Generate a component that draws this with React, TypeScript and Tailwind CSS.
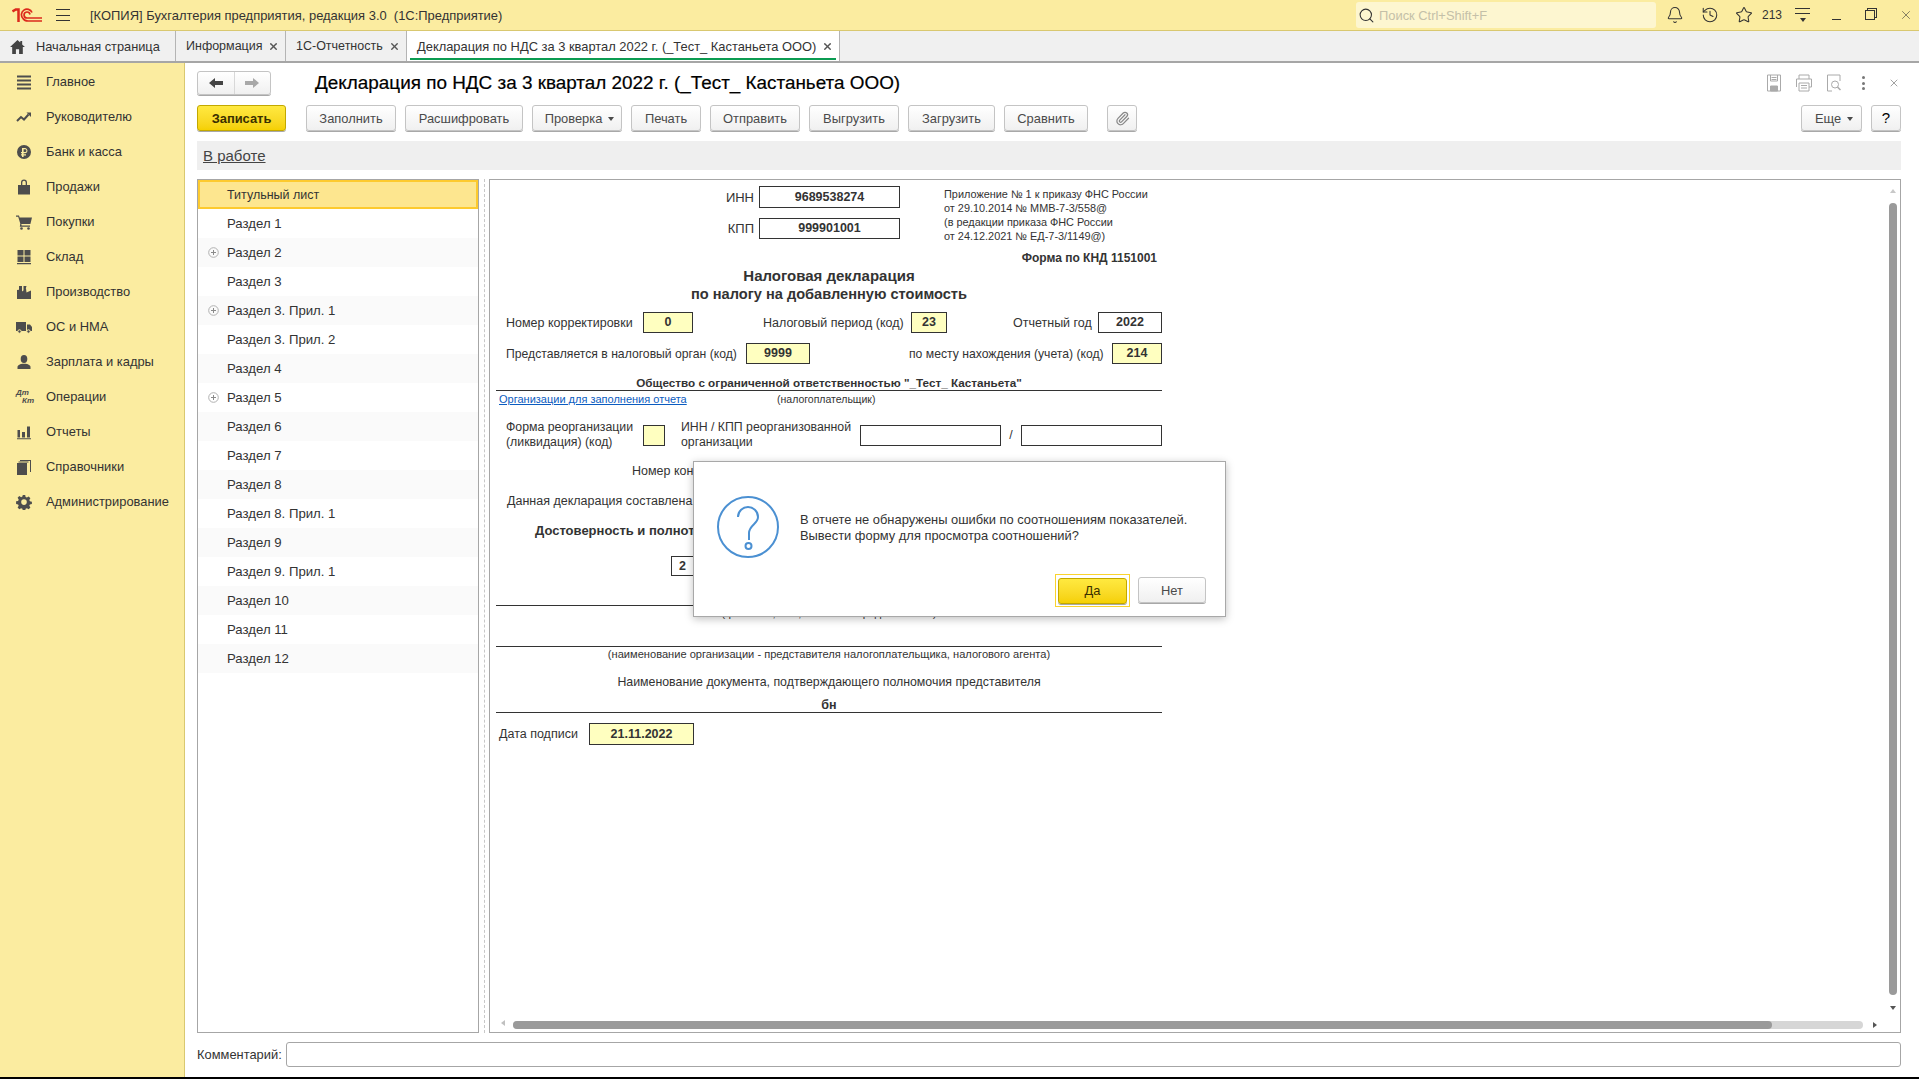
import type { ReactNode } from 'react';
import { Bell, History, Star, Paperclip, Search, X } from 'lucide-react';
import clsx from 'clsx';

const SECTIONS = [
  { name: 'Титульный лист' },
  { name: 'Раздел 1' },
  { name: 'Раздел 2', plus: true },
  { name: 'Раздел 3' },
  { name: 'Раздел 3. Прил. 1', plus: true },
  { name: 'Раздел 3. Прил. 2' },
  { name: 'Раздел 4' },
  { name: 'Раздел 5', plus: true },
  { name: 'Раздел 6' },
  { name: 'Раздел 7' },
  { name: 'Раздел 8' },
  { name: 'Раздел 8. Прил. 1' },
  { name: 'Раздел 9' },
  { name: 'Раздел 9. Прил. 1' },
  { name: 'Раздел 10' },
  { name: 'Раздел 11' },
  { name: 'Раздел 12' },
];

function NavIcon({ children }: { children: ReactNode }) {
  return (
    <svg viewBox="0 0 16 16" className="w-4 h-4 text-[#4d4d4d]" fill="currentColor">
      {children}
    </svg>
  );
}

const NAV: { label: string; icon: ReactNode }[] = [
  {
    label: 'Главное',
    icon: (
      <NavIcon>
        <path d="M1 1.500h14v2H1zM1 5.500h14v2H1zM1 9.500h14v2H1zM1 13.500h14v2H1z" />
      </NavIcon>
    ),
  },
  {
    label: 'Руководителю',
    icon: (
      <NavIcon>
        <path d="M1 12l4-4 3 2.500 4.500-5" fill="none" stroke="currentColor" strokeWidth="2" />
        <path d="M10.500 3.500H15V8z" />
      </NavIcon>
    ),
  },
  {
    label: 'Банк и касса',
    icon: (
      <NavIcon>
        <path
          fillRule="evenodd"
          d="M8 1a7 7 0 1 1 0 14A7 7 0 0 1 8 1zM6 4v4H5v1.300h1v1H5v1.300h1V13h1.600v-1.400H10v-1.300H7.600v-1H9.300a2.700 2.700 0 0 0 0-5.300zm1.600 1.300h1.500a1.350 1.350 0 0 1 0 2.700H7.600z"
        />
      </NavIcon>
    ),
  },
  {
    label: 'Продажи',
    icon: (
      <NavIcon>
        <path d="M2 6h3V3.500a3 3 0 0 1 6 0V6h3v9.500H2zM6.300 6h3.400V3.500a1.700 1.700 0 0 0-3.400 0z" fillRule="evenodd" />
      </NavIcon>
    ),
  },
  {
    label: 'Покупки',
    icon: (
      <NavIcon>
        <path d="M0 1.500h3l.6 2H16l-1.600 6.500H5.300L5.600 11.500H14v1.200H3.800l.5-3L2.200 2.800H0z" />
        <circle cx="5.500" cy="14.500" r="1.300" />
        <circle cx="12.500" cy="14.500" r="1.300" />
      </NavIcon>
    ),
  },
  {
    label: 'Склад',
    icon: (
      <NavIcon>
        <path d="M1.500 1h6v5.500h-6zM8.500 1h6v5.500h-6zM1.500 7.500h6V13h-6zM8.500 7.500h6V13h-6zM1 14h14v1.300H1z" />
      </NavIcon>
    ),
  },
  {
    label: 'Производство',
    icon: (
      <NavIcon>
        <path d="M1 15V6l2-.2V2h3v5.500L10 4.500l.5 4L15 6.500V15zM7.500 2h3l-1 3.500-2 1.500z" />
      </NavIcon>
    ),
  },
  {
    label: 'ОС и НМА',
    icon: (
      <NavIcon>
        <path d="M0 3h10v9H0zM11 5.500h3l2 2.500v4h-5z" />
        <circle cx="3.500" cy="12.500" r="1.700" stroke="#fbeca0" />
        <circle cx="12.500" cy="12.500" r="1.700" stroke="#fbeca0" />
      </NavIcon>
    ),
  },
  {
    label: 'Зарплата и кадры',
    icon: (
      <NavIcon>
        <ellipse cx="8" cy="5" rx="3.300" ry="4" />
        <path d="M1.500 15v-2c0-2 3-3 4.500-3.300h4c1.500.3 4.500 1.300 4.500 3.300v2z" />
      </NavIcon>
    ),
  },
  {
    label: 'Операции',
    icon: (
      <span className="flex flex-col text-[8px] leading-[8px] font-bold italic text-[#4d4d4d] w-4 h-4 whitespace-nowrap">
        <span>Дт</span>
        <span className="ml-[6px]">Кт</span>
      </span>
    ),
  },
  {
    label: 'Отчеты',
    icon: (
      <NavIcon>
        <path d="M1.500 6h2.500v7.500H1.500zM6 8h3v5.500H6zM11 2.500h3v11h-3zM1 14.300h14v1H1z" />
      </NavIcon>
    ),
  },
  {
    label: 'Справочники',
    icon: (
      <NavIcon>
        <path d="M1 4h10v12H1zM4 1h11v12h-1V2H4zM2.500 2.500h10v1h-10z" />
      </NavIcon>
    ),
  },
  {
    label: 'Администрирование',
    icon: (
      <NavIcon>
        <path
          fillRule="evenodd"
          d="M6.800 1h2.400l.4 2 1.300.6 1.800-1.100 1.700 1.700-1.100 1.800.6 1.300 2 .4v2.400l-2 .4-.6 1.300 1.100 1.800-1.700 1.700-1.800-1.100-1.300.6-.4 2H6.800l-.4-2-1.300-.6-1.800 1.100-1.700-1.700 1.100-1.800-.6-1.300-2-.4V7.300l2-.4.6-1.300-1.100-1.800 1.700-1.700 1.800 1.100 1.300-.6zM8 5.300a2.800 2.800 0 1 0 0 5.600 2.800 2.800 0 0 0 0-5.600z"
        />
      </NavIcon>
    ),
  },
];

function Caret({ className }: { className?: string }) {
  return (
    <svg viewBox="0 0 6 4" className={clsx('w-[6px] h-[4px]', className)} fill="currentColor">
      <path d="M0 0h6L3 4z" />
    </svg>
  );
}

function Btn({ w, children, primary, className }: { w: string; children: ReactNode; primary?: boolean; className?: string }) {
  return (
    <div
      className={clsx(
        'h-[26px] pt-[1px] rounded-[3px] border flex items-center justify-center shrink-0 shadow-[0_1px_0_#a8a8a8]',
        primary
          ? 'bg-gradient-to-b from-[#ffe93f] to-[#f5d000] border-[#c2a800] text-[#3a3000]'
          : 'bg-gradient-to-b from-white to-[#f0f0f0] border-[#c4c4c4] text-[#4a4a4a]',
        w,
        className,
      )}
    >
      {children}
    </div>
  );
}

function Field({ w, children, yellow, h = 'h-[21px]' }: { w: string; children?: ReactNode; yellow?: boolean; h?: string }) {
  return (
    <div
      className={clsx(
        'border border-[#333] flex items-center justify-center font-bold text-[12.500px] text-[#333] shrink-0',
        yellow ? 'bg-[#ffffc0]' : 'bg-white',
        w,
        h,
      )}
    >
      {children}
    </div>
  );
}

function Tab({ w, label, active, size }: { w: string; label: string; active?: boolean; size?: string }) {
  return (
    <div className={clsx('relative flex items-center shrink-0 border-r border-[#b4b4b4] justify-between pl-[10px] pr-[6px] pt-[1px] h-full', w, active && 'bg-white')}>
      <span className={clsx('whitespace-nowrap', size)}>{label}</span>
      <X className="w-[11px] h-[11px] text-[#555]" strokeWidth={3} />
      {active && <div className="absolute left-[3px] right-[3px] bottom-[1px] h-[2px] bg-[#0b9b51]" />}
    </div>
  );
}

function Scrollbars() {
  return (
    <>
      <Caret className="absolute left-[1400px] top-[9px] rotate-180 text-[#c8c8c8]" />
      <div className="absolute left-[1399px] top-[23px] w-[8px] h-[792px] rounded-full bg-[#9a9a9a]" />
      <Caret className="absolute left-[1400px] top-[826px] text-[#555]" />
      <Caret className="absolute left-[10px] top-[841px] rotate-90 text-[#c0c0c0]" />
      <div className="absolute left-[23px] top-[841px] w-[1350px] h-[8px] rounded-full bg-[#d6d6d6]">
        <div className="w-[1259px] h-[8px] rounded-full bg-[#9a9a9a]" />
      </div>
      <Caret className="absolute left-[1382px] top-[843px] -rotate-90 text-[#555]" />
    </>
  );
}

function DeclarationForm() {
  return (
    <div className="ml-[6px] w-[666px] text-[#333] text-[12.500px] whitespace-nowrap">
      <div className="flex h-[63px] items-start">
        <div className="w-[404px] pt-[6px] flex flex-col items-end">
          <div className="flex items-center">
            <span className="mr-[5px] pt-[1px] text-[13px]">ИНН</span>
            <Field w="w-[141px]" h="h-[22px]">9689538274</Field>
          </div>
          <div className="flex items-center mt-[10px]">
            <span className="mr-[5px] pt-[1px] text-[13px]">КПП</span>
            <Field w="w-[141px]">999901001</Field>
          </div>
        </div>
        <div className="ml-[44px] mt-[7px] text-[10.900px] leading-[14px]">
          <div>Приложение № 1 к приказу ФНС России</div>
          <div>от 29.10.2014 № ММВ-7-3/558@</div>
          <div>(в редакции приказа ФНС России</div>
          <div>от 24.12.2021 № ЕД-7-3/1149@)</div>
        </div>
      </div>
      <div className="mt-[8px] h-[14px] leading-[14px] w-[661px] text-right font-bold text-[12px]">Форма по КНД 1151001</div>
      <div className="mt-[2px] text-center font-bold text-[14.600px] leading-[18px]">
        <div className="text-[15px]">Налоговая декларация</div>
        <div>по налогу на добавленную стоимость</div>
      </div>
      <div className="mt-[9px] flex items-center pl-[10px] h-[21px]">
        <span className="w-[137px] pt-[1px]">Номер корректировки</span>
        <Field w="w-[50px]" yellow>0</Field>
        <span className="ml-[70px] w-[148px] pt-[1px]">Налоговый период (код)</span>
        <Field w="w-[36px]" yellow>23</Field>
        <span className="ml-[66px] w-[85px] pt-[1px]">Отчетный год</span>
        <Field w="w-[64px]">2022</Field>
      </div>
      <div className="mt-[10px] flex items-center pl-[10px] h-[21px] text-[12.200px]">
        <span className="w-[240px] pt-[1px]">Представляется в налоговый орган (код)</span>
        <Field w="w-[64px]" yellow>9999</Field>
        <span className="ml-[99px] w-[203px] pt-[1px]">по месту нахождения (учета) (код)</span>
        <Field w="w-[50px]" yellow>214</Field>
      </div>
      <div className="mt-[11px] h-[16px] border-b border-[#333] text-center font-bold text-[11.700px] leading-[16px]">
        Общество с ограниченной ответственностью "_Тест_ Кастаньета"
      </div>
      <div className="h-[16px] flex items-center pl-[3px] text-[11px]">
        <span className="w-[278px] text-[#0b5cc0] underline">Организации для заполнения отчета</span>
        <span className="text-[10.500px] pt-[1px]">(налогоплательщик)</span>
      </div>
      <div className="mt-[18px] flex items-center pl-[10px] h-[21px] text-[12.300px]">
        <span className="w-[137px] leading-[15px] pb-[2px]">
          Форма реорганизации
          <br />
          (ликвидация) (код)
        </span>
        <Field w="w-[22px]" yellow />
        <span className="ml-[16px] w-[179px] leading-[15px] pb-[2px]">
          ИНН / КПП реорганизованной
          <br />
          организации
        </span>
        <Field w="w-[141px]" />
        <span className="w-[20px] text-center">/</span>
        <Field w="w-[141px]" />
      </div>
      <div className="mt-[17px] h-[16px] leading-[16px] pl-[136px]">Номер контактного телефона</div>
      <div className="mt-[14px] h-[16px] leading-[16px] pl-[11px] text-[12.500px]">Данная декларация составлена на</div>
      <div className="mt-[14px] h-[16px] leading-[16px] pl-[39px] font-bold text-[13px]">Достоверность и полнота сведений</div>
      <div className="mt-[17px] ml-[175px]">
        <Field w="w-[23px]" h="h-[20px]">2</Field>
      </div>
      <div className="mt-[29px] h-px bg-[#333]" />
      <div className="h-[14px] leading-[14px] text-center text-[11px]">(фамилия, имя, отчество* представителя)</div>
      <div className="mt-[26px] h-px bg-[#333]" />
      <div className="h-[14px] leading-[14px] text-center text-[11.100px]">
        (наименование организации - представителя налогоплательщика, налогового агента)
      </div>
      <div className="mt-[13px] h-[16px] leading-[16px] text-center text-[12.350px]">Наименование документа, подтверждающего полномочия представителя</div>
      <div className="mt-[7px] h-[16px] border-b border-[#333] text-center font-bold text-[12.500px] leading-[16px]">бн</div>
      <div className="mt-[10px] flex items-center pl-[3px]">
        <span className="w-[90px]">Дата подписи</span>
        <Field w="w-[105px]" h="h-[22px]" yellow>21.11.2022</Field>
      </div>
    </div>
  );
}

function QuestionDialog() {
  return (
    <div className="absolute left-[693px] top-[461px] w-[533px] h-[156px] bg-white border border-[#a8a8a8] shadow-[0_2px_8px_rgba(0,0,0,0.25)]">
      <div className="flex items-center pl-[23px] pt-[34px]">
        <svg viewBox="0 0 62 62" className="w-[62px] h-[62px] shrink-0" fill="none" stroke="#4b90d2" strokeWidth="2">
          <circle cx="31" cy="31" r="30" />
          <path d="M21 21c0-6 5-10 10-10s10 4 10 10c0 7-9 8-9 16v7" />
          <circle cx="31.500" cy="50" r="3" />
        </svg>
        <div className="ml-[21px] pt-[2px] text-[12.900px] text-[#333] leading-[16.500px] whitespace-nowrap">
          В отчете не обнаружены ошибки по соотношениям показателей.
          <br />
          Вывести форму для просмотра соотношений?
        </div>
      </div>
      <div className="absolute left-[361px] top-[112px] w-[75px] h-[33px] border border-[#fad32e] flex items-center justify-center">
        <Btn w="w-[69px]" primary>Да</Btn>
      </div>
      <div className="absolute left-[444px] top-[115px]">
        <Btn w="w-[68px]">Нет</Btn>
      </div>
    </div>
  );
}

export default function App() {
  return (
    <div
      className="relative w-[1919px] h-[1079px] overflow-hidden flex flex-col bg-white text-[12.900px] text-[#333] border-b-2 border-black"
      style={{ fontFamily: '"Liberation Sans", Arial, sans-serif' }}
    >
      {/* title bar */}
      <div className="h-[31px] shrink-0 bg-[#fbeca0] border-b border-[#d9c870] flex items-center">
        <svg viewBox="0 0 30 15" className="ml-[12px] w-[30px] h-[15px] shrink-0" fill="none" stroke="#dc2a1c" strokeWidth="1.700">
          <path d="M.5 3.500L3.800 1.500H6.500V14" strokeWidth="2.500" />
          <path d="M20 4.500A5.500 5.500 0 1 0 11 10.500c1 1.500 3 2.500 5 2.500H30" />
          <path d="M18 6.500A3 3 0 1 0 15 10H30" />
        </svg>
        <div className="ml-[14px] w-[14px] flex flex-col gap-[4.200px] shrink-0">
          <div className="h-px bg-[#333]" />
          <div className="h-px bg-[#333]" />
          <div className="h-px bg-[#333]" />
        </div>
        <div className="ml-[20px] pt-[1px] text-[12.950px] whitespace-pre text-[#333]">[КОПИЯ] Бухгалтерия предприятия, редакция 3.0  (1С:Предприятие)</div>
        <div className="ml-auto w-[300px] h-[26px] bg-[#fdf6d0] rounded-[3px] flex items-center pl-[2px] text-[#c4c0a8]">
          <Search className="w-[17px] h-[17px] text-[#333] shrink-0" strokeWidth={1.500} />
          <span className="ml-[4px] pt-[1px]">Поиск Ctrl+Shift+F</span>
        </div>
        <div className="flex items-center shrink-0 text-[#333]">
          <Bell className="ml-[10px] w-[18px] h-[18px]" strokeWidth={1.400} />
          <History className="ml-[17px] w-[18px] h-[18px]" strokeWidth={1.400} />
          <Star className="ml-[16px] w-[18px] h-[18px]" strokeWidth={1.400} />
          <span className="ml-[9px] w-[20px] text-[12px]">213</span>
          <div className="ml-[13px] w-[15px] flex flex-col items-center gap-[4px] shrink-0">
            <div className="h-px w-full bg-[#333]" />
            <div className="h-px w-full bg-[#333]" />
            <Caret className="text-[#333]" />
          </div>
          <div className="ml-[22px] w-[9px] h-px bg-[#333] mt-[8px]" />
          <div className="ml-[24px] w-[10px] h-[10px] border border-[#333] shadow-[2px_-2px_0_-1px_#fbeca0,2px_-2px_0_0_#333]" />
          <X className="ml-[24px] mr-[6px] w-[14px] h-[14px]" strokeWidth={1} />
        </div>
      </div>

      {/* tabs */}
      <div className="h-[32px] shrink-0 bg-[#f0f0f0] border-b-2 border-[#a6a6a6] flex items-stretch pb-0">
        <div className="w-[176px] shrink-0 flex items-center border-r border-[#b4b4b4] pl-[10px] pt-[1px]">
          <svg viewBox="0 0 16 15" className="w-[15px] h-[14px] text-[#444]" fill="currentColor">
            <path d="M8 0L0 7.500h2.300V15h4V10h3.400v5h4V7.500H16L13 4.700V1h-2v1.800z" />
          </svg>
          <span className="ml-[11px] text-[12.800px]">Начальная страница</span>
        </div>
        <Tab w="w-[110px]" label="Информация" size="text-[12.500px]" />
        <Tab w="w-[121px]" label="1С-Отчетность" size="text-[12.500px]" />
        <Tab w="w-[433px]" label="Декларация по НДС за 3 квартал 2022 г. (_Тест_ Кастаньета ООО)" active />
      </div>

      <div className="flex flex-1 min-h-0">
        {/* sidebar */}
        <div className="w-[185px] shrink-0 bg-[#fbeca0] border-r border-[#d9c870] pt-[1px]">
          {NAV.map((item) => (
            <div key={item.label} className="h-[35px] flex items-center">
              <div className="ml-[16px] w-4 h-4 flex items-center justify-center">{item.icon}</div>
              <span className="ml-[14px] whitespace-nowrap">{item.label}</span>
            </div>
          ))}
        </div>

        {/* form */}
        <div className="flex-1 min-w-0 pl-[12px] pr-[18px] pt-[8px] flex flex-col">
          <div className="h-[24px] flex items-center shrink-0 relative">
            <div className="w-[74px] h-[24px] flex rounded-[3px] border border-[#c4c4c4] bg-gradient-to-b from-white to-[#f0f0f0] shadow-[0_1px_0_#a8a8a8]">
              <div className="flex-1 flex items-center justify-center border-r border-[#d8d8d8]">
                <svg viewBox="0 0 14 10" className="w-[14px] h-[10px] text-[#444]" fill="currentColor">
                  <path d="M0 5l6-5v3h8v4H6v3z" />
                </svg>
              </div>
              <div className="flex-1 flex items-center justify-center">
                <svg viewBox="0 0 14 10" className="w-[14px] h-[10px] text-[#a8a8a8]" fill="currentColor">
                  <path d="M14 5L8 0v3H0v4h8v3z" />
                </svg>
              </div>
            </div>
            <div className="ml-[44px] text-[18.900px] text-black whitespace-nowrap [-webkit-text-stroke:0.2px_black]">
              Декларация по НДС за 3 квартал 2022 г. (_Тест_ Кастаньета ООО)
            </div>
            <div className="ml-auto flex items-center text-[#aaa]">
              <svg viewBox="0 0 16 18" className="w-[16px] h-[18px]" fill="none" stroke="currentColor">
                <path d="M1.500 1h13v16h-13zM4.500 1v6h7V1M5.500 3.500h5M5.500 5.500h5" />
                <path d="M4.500 12h7v5h-7z" fill="currentColor" />
              </svg>
              <svg viewBox="0 0 18 18" className="ml-[13px] w-[18px] h-[18px]" fill="none" stroke="currentColor">
                <path d="M4 5V1h10v4M1.500 13V5h15v8H14M4 9h10v8H4zM6 11.500h6M6 14h6" />
              </svg>
              <svg viewBox="0 0 16 18" className="ml-[13px] w-[16px] h-[18px]" fill="none" stroke="currentColor">
                <path d="M6 17H1.500V1H14v6" />
                <circle cx="9" cy="10.500" r="3.500" />
                <path d="M11.500 13l3 3" strokeWidth="1.500" />
              </svg>
              <div className="ml-[20px] flex flex-col gap-[2.500px]">
                <div className="w-[3px] h-[3px] rounded-full bg-[#777]" />
                <div className="w-[3px] h-[3px] rounded-full bg-[#777]" />
                <div className="w-[3px] h-[3px] rounded-full bg-[#777]" />
              </div>
              <X className="ml-[23px] mr-[1px] w-[12px] h-[12px] text-[#444]" strokeWidth={1} />
            </div>
          </div>

          <div className="mt-[10px] h-[26px] shrink-0 flex items-center">
            <Btn w="w-[89px]" primary className="font-bold">Записать</Btn>
            <Btn w="w-[90px]" className="ml-[20px]">Заполнить</Btn>
            <Btn w="w-[118px]" className="ml-[9px]">Расшифровать</Btn>
            <Btn w="w-[90px]" className="ml-[9px] gap-[6px] pl-[5px]">Проверка<Caret /></Btn>
            <Btn w="w-[70px]" className="ml-[9px]">Печать</Btn>
            <Btn w="w-[90px]" className="ml-[9px]">Отправить</Btn>
            <Btn w="w-[90px]" className="ml-[9px]">Выгрузить</Btn>
            <Btn w="w-[87px]" className="ml-[9px]">Загрузить</Btn>
            <Btn w="w-[84px]" className="ml-[9px]">Сравнить</Btn>
            <Btn w="w-[30px]" className="ml-[19px]">
              <Paperclip className="w-[15px] h-[15px] text-[#888]" />
            </Btn>
            <Btn w="w-[61px]" className="ml-auto gap-[6px] pl-[5px]">Еще<Caret /></Btn>
            <Btn w="w-[30px]" className="ml-[9px] text-black text-[15px]">?</Btn>
          </div>

          <div className="mt-[10px] h-[29px] pt-[1px] shrink-0 bg-[#efefef] flex items-center pl-[6px] text-[15px] text-[#444]">
            <span className="underline">В работе</span>
          </div>

          <div className="mt-[9px] h-[854px] shrink-0 flex">
            <div className="w-[282px] shrink-0 border border-[#a6a6a6] text-[13.200px]">
              {SECTIONS.map((s, i) => (
                <div
                  key={s.name}
                  className={clsx(
                    'h-[29px] flex items-center',
                    i === 0 ? 'bg-[#fde68f] border-2 border-[#fdca2e] pl-[8px] pt-[1px] text-[12.500px]' : 'pl-[10px]',
                    i % 2 === 0 && i > 0 && 'bg-[#fafafa]',
                  )}
                >
                  <span className="w-[11px] shrink-0 flex">
                    {s.plus && (
                      <svg viewBox="0 0 11 11" className="w-[11px] h-[11px]" fill="none" stroke="#8a8a8a">
                        <circle cx="5.500" cy="5.500" r="4.800" stroke="#b0b0b0" />
                        <path d="M5.500 3v5M3 5.500h5" />
                      </svg>
                    )}
                  </span>
                  <span className="ml-[8px]">{s.name}</span>
                </div>
              ))}
            </div>
            <div className="w-[10px] shrink-0 flex justify-center">
              <div className="h-full border-l border-dashed border-[#c8c8c8]" />
            </div>
            <div className="relative flex-1 min-w-0 border border-[#a6a6a6] overflow-hidden">
              <DeclarationForm />
              <Scrollbars />
            </div>
          </div>

          <div className="mt-[9px] h-[25px] shrink-0 flex items-center">
            <span className="w-[89px] shrink-0">Комментарий:</span>
            <div className="flex-1 h-[25px] border border-[#a6a6a6] rounded-[3px]" />
          </div>
        </div>
      </div>

      <QuestionDialog />
    </div>
  );
}
